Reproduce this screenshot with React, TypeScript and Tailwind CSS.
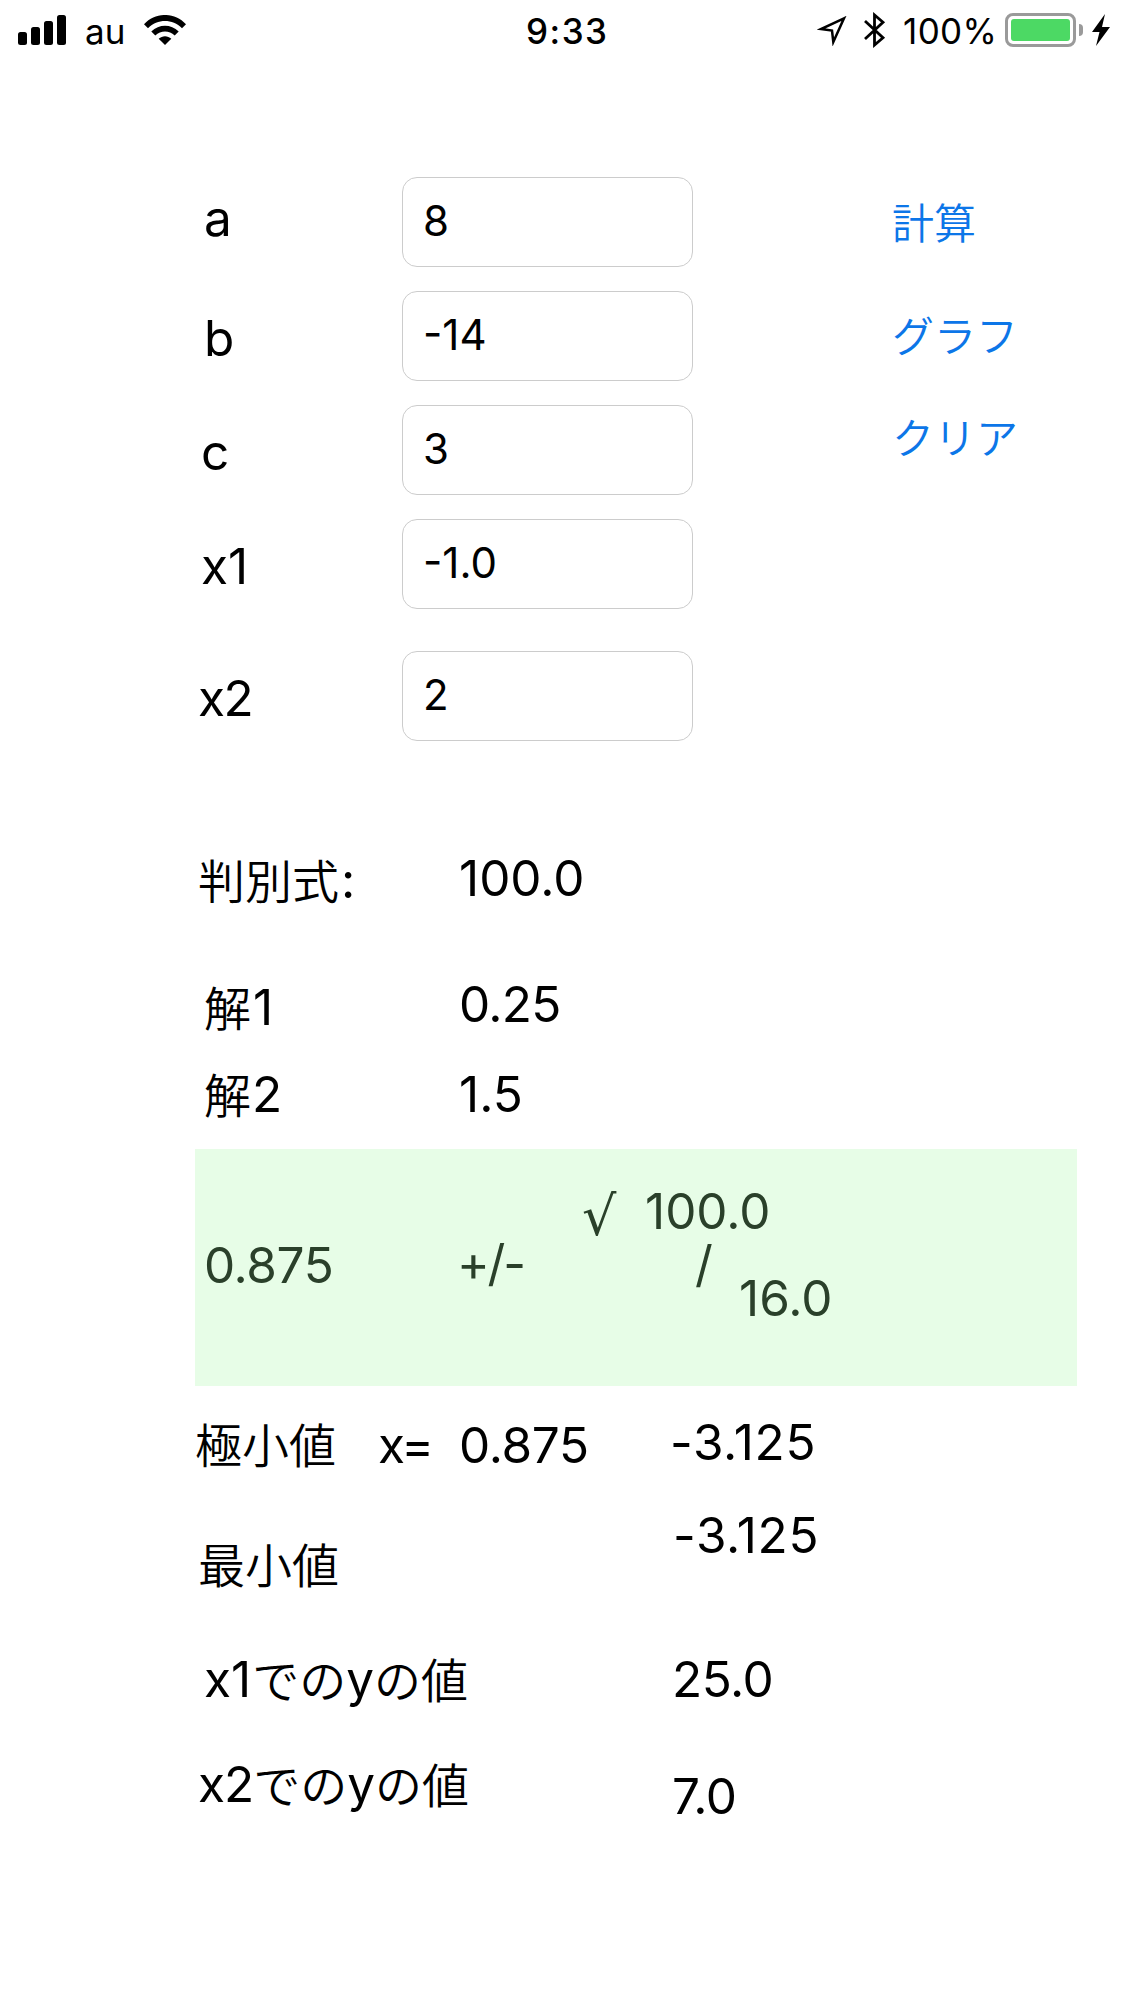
import React from "react"

type FieldProps = { label: string; value: string; row?: string; labelClass: string }

const StatusBar = () => {
  return (
    <header className="flex h-[60px] w-full items-start text-[35px] leading-[44px]">
      <svg className="ml-[18px] mt-[15px] h-[30px] w-[48px]" viewBox="0 0 48 30">
        <rect x="0" y="17" width="9" height="13" rx="2.5" />
        <rect x="13" y="12" width="9" height="18" rx="2.5" />
        <rect x="26" y="6" width="9" height="24" rx="2.5" />
        <rect x="39" y="0" width="9" height="30" rx="2.5" />
      </svg>
      <span className="ml-[19px] mt-[9px] w-[59px] font-[370]">au</span>
      <svg className="mt-[15px] h-[30px] w-[42px]" viewBox="0 0 42 30">
        <path d="M0 9.2C11.500-3.100 30.500-3.100 42 9.200L38 13.200C28.500 3.700 13.500 3.700 4 13.200Z" />
        <path d="M7.300 16.500C15 8.700 27 8.700 34.700 16.500L30.700 20.500C25.200 15.200 16.800 15.200 11.300 20.500Z" />
        <path d="M14.700 23.700C18.300 20.300 23.700 20.300 27.300 23.700L21 30Z" />
      </svg>
      <span className="ml-[340px] mt-[9px] w-[291px] font-[550] tracking-[1.500px]">9:33</span>
      <svg className="mt-[16px] h-[30px] w-[30px]" viewBox="0 0 30 30" fill="none" stroke="#000" strokeWidth="2.500">
        <path d="M27 2.300L4 13L15 14.500L16.300 26Z" strokeLinejoin="miter" />
      </svg>
      <svg className="ml-[17px] mt-[12px] h-[36px] w-[22px]" viewBox="0 0 22 36" fill="none" stroke="#000" strokeWidth="2.800">
        <path d="M1 9L19 25.700L10.500 33V3L19 10.300L1 27" />
      </svg>
      <span className="ml-[17px] mt-[9px] w-[102px] font-[370] tracking-[0.400px]">100%</span>
      <div className="mt-[13px] h-[34px] w-[71px] rounded-[8px] border-[3px] border-[#9a9a9a] p-[3px]">
        <div className="h-full w-full rounded-[3px] bg-[#4cd964]" />
      </div>
      <div className="ml-[3px] mt-[24px] h-[12px] w-[4px] rounded-r-full bg-[#9a9a9a]" />
      <svg className="ml-[9px] mt-[14px] h-[32px] w-[18px]" viewBox="0 0 18 32">
        <path d="M13 0L0 18H7.500L4 32L18 13H10Z" />
      </svg>
    </header>
  )
}

const Kana = ({ children }: { children: React.ReactNode }) => {
  return <span className="align-[-1px] text-[47px] font-[350] leading-none">{children}</span>
}

const Field = ({ label, value, row = "mt-6", labelClass }: FieldProps) => {
  return (
    <div className={`flex h-[90px] ${row}`}>
      <label className={`w-[207px] ${labelClass}`}>{label}</label>
      <div className="h-[90px] w-[291px] rounded-[15px] border border-[#cccccc] pl-[20px] pt-[13px] text-[42px] leading-[60px]">
        {value}
      </div>
    </div>
  )
}

export default function App() {
  return (
    <div className="h-[2001px] w-[1125px] overflow-hidden bg-white font-['Inter','Noto_Sans_CJK_JP',sans-serif] text-[49.5px] leading-[60px] text-black">
      <StatusBar />

      <section className="flex pl-[195px] pt-[117px]">
        <div className="w-[498px]">
          <Field label="a" value="8" row="" labelClass="pl-[9px] pt-[11px]" />
          <Field label="b" value="-14" labelClass="pl-[9px] pt-[17px]" />
          <Field label="c" value="3" labelClass="pl-[6px] pt-[17px]" />
          <Field label="x1" value="-1.0" labelClass="pl-[6px] pt-[17px]" />
          <Field label="x2" value="2" row="mt-[42px]" labelClass="pl-[3px] pt-[17px] tracking-[-1.500px]" />
        </div>
        <nav className="ml-[199px] flex flex-col items-start text-[42px] font-[350] leading-[60px] text-[#0c76e8]">
          <button className="mt-[17px]">計算</button>
          <button className="mt-[53px]">グラフ</button>
          <button className="mt-[42px]">クリア</button>
        </nav>
      </section>

      <section className="pl-[195px] pt-[107px]">
        <div className="flex h-[126px]">
          <span className="w-[264px] pl-[3px] pt-[2px]"><Kana>判別式</Kana><span className="pl-[2px]">:</span></span>
          <span>100.0</span>
        </div>
        <div className="flex h-[90px]">
          <span className="w-[264px] pl-[9px] pt-[3px]"><Kana>解</Kana><span className="pl-[2px]">1</span></span>
          <span className="tracking-[-0.700px]">0.25</span>
        </div>
        <div className="flex h-[85px]">
          <span className="w-[264px] pl-[9px]"><Kana>解</Kana><span className="pl-[1px]">2</span></span>
          <span>1.5</span>
        </div>
      </section>

      {/* quadratic formula panel */}
      <section className="ml-[195px] flex h-[237px] w-[882px] bg-[#e7fde7] text-[#2a402a]">
        <span className="w-[262px] pl-[9px] pt-[86px] tracking-[-0.400px]">0.875</span>
        <span className="w-[125px] pt-[84px] tracking-[-2.200px]">+/-</span>
        <span className="w-[63px] pt-[38px] font-['DejaVu_Sans',sans-serif] text-[54px]">√</span>
        <div className="flex w-[94px] flex-col pt-[35px] leading-[54px]">
          <span>100.0</span>
          <span className="pl-[50px] leading-[52px]">/</span>
        </div>
        <span className="pt-[119px]">16.0</span>
      </section>

      <section className="pl-[195px] pt-[26px]">
        <div className="flex h-[93px]">
          <span className="w-[183px] pt-[2px]"><Kana>極小値</Kana></span>
          <span className="w-[81px] pt-[3px] tracking-[-2px]">x=</span>
          <span className="w-[211px] pt-[3px] tracking-[-0.300px]">0.875</span>
          <span className="tracking-[0.700px]">-3.125</span>
        </div>
        <div className="flex h-[144px]">
          <span className="w-[478px] pl-[3px] pt-[29px]"><Kana>最小値</Kana></span>
          <span className="tracking-[0.700px]">-3.125</span>
        </div>
        <div className="flex h-[105px]">
          <span className="w-[477px] pl-[9px]">x1<span className="pl-px"><Kana>での</Kana></span>y<Kana>の値</Kana></span>
          <span className="tracking-[-0.500px]">25.0</span>
        </div>
        <div className="flex">
          <span className="w-[477px] pl-[3px]"><span className="tracking-[-1px]">x2</span><Kana>での</Kana>y<Kana>の値</Kana></span>
          <span className="pt-[12px] tracking-[-0.500px]">7.0</span>
        </div>
      </section>
    </div>
  )
}
